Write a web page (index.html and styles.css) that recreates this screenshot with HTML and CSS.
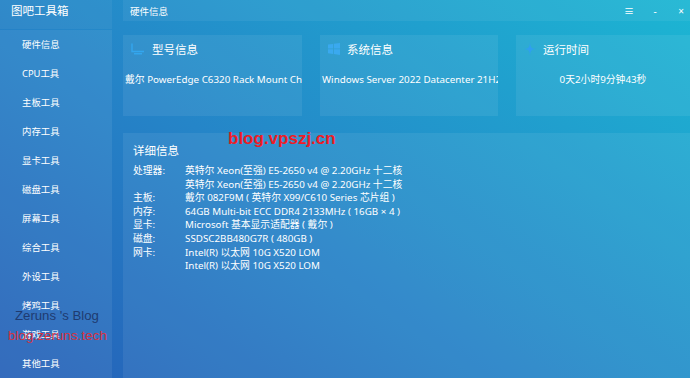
FILE: index.html
```html
<!DOCTYPE html>
<html lang="zh-CN">
<head>
    <meta charset="UTF-8">
    <title>图吧工具箱</title>
    <link rel="stylesheet" href="styles.css">
</head>
<body>
    <div class="app">
        <aside class="side">
            <div class="brand">图吧工具箱</div>
            <nav class="menu">
                <a>硬件信息</a>
                <a>CPU工具</a>
                <a>主板工具</a>
                <a>内存工具</a>
                <a>显卡工具</a>
                <a>磁盘工具</a>
                <a>屏幕工具</a>
                <a>综合工具</a>
                <a>外设工具</a>
                <a>烤鸡工具</a>
                <a>游戏工具</a>
                <a>其他工具</a>
            </nav>
        </aside>
        <main class="main">
            <header class="bar">
                <span class="bar-title">硬件信息</span>
                <span class="ctl">≡</span>
                <span class="ctl">-</span>
                <span class="ctl">×</span>
            </header>
            <section class="cards">
                <div class="card">
                    <div class="card-head">
                        <svg class="ico" width="14" height="12" viewBox="0 0 14 12">
                            <path d="M1 0.5v8h12" fill="none" stroke="#33a6ee" stroke-width="1.4"/>
                            <rect x="3" y="10" width="8" height="1.5" fill="#33a6ee"/>
                        </svg>
                        <span>型号信息</span>
                    </div>
                    <div class="card-val">戴尔 PowerEdge C6320 Rack Mount Chassis</div>
                </div>
                <div class="card">
                    <div class="card-head">
                        <svg class="ico" width="12" height="12" viewBox="0 0 12 12">
                            <path d="M0 1.6l5-.7v4.6H0zM5.8.8L12 0v5.5H5.8zM0 6.3h5v4.7l-5-.7zM5.8 6.3H12V12l-6.2-.9z" fill="#3aa9ef"/>
                        </svg>
                        <span>系统信息</span>
                    </div>
                    <div class="card-val">Windows Server 2022 Datacenter 21H2</div>
                </div>
                <div class="card">
                    <div class="card-head">
                        <svg class="ico" width="12" height="14" viewBox="0 0 12 14">
                            <path d="M6 0C6.4 5 7 6.5 12 7 7 7.5 6.4 9 6 14 5.6 9 5 7.5 0 7 5 6.5 5.6 5 6 0z" fill="#2f9ff0"/>
                        </svg>
                        <span>运行时间</span>
                    </div>
                    <div class="card-val">0天2小时9分钟43秒</div>
                </div>
            </section>
            <section class="detail">
                <h2>详细信息</h2>
                <div class="rows">
                    <span>处理器:</span><span>英特尔 Xeon(至强) E5-2650 v4 @ 2.20GHz 十二核</span>
                    <span></span><span>英特尔 Xeon(至强) E5-2650 v4 @ 2.20GHz 十二核</span>
                    <span>主板:</span><span>戴尔 082F9M ( 英特尔 X99/C610 Series 芯片组 )</span>
                    <span>内存:</span><span>64GB Multi-bit ECC DDR4 2133MHz ( 16GB × 4 )</span>
                    <span>显卡:</span><span>Microsoft 基本显示适配器 ( 戴尔 )</span>
                    <span>磁盘:</span><span>SSDSC2BB480G7R ( 480GB )</span>
                    <span>网卡:</span><span>Intel(R) 以太网 10G X520 LOM</span>
                    <span></span><span>Intel(R) 以太网 10G X520 LOM</span>
                </div>
            </section>
        </main>
    </div>
    <div class="mark mark-vps">blog.vpszj.cn</div>
    <div class="mark mark-zb">Zeruns 's Blog</div>
    <div class="mark mark-zt">blog.zeruns.tech</div>
</body>
</html>
```

FILE: styles.css
```css
* {
    margin: 0;
    padding: 0;
    box-sizing: border-box;
}

body {
    width: 690px;
    height: 378px;
    overflow: hidden;
    font-family: "Noto Sans", "Noto Sans CJK SC", sans-serif;
    color: #ffffff;
    background: linear-gradient(35deg, #2560b8 0%, #2585c8 45%, #1cb6d3 100%);
}

.app {
    display: flex;
    height: 378px;
    gap: 11px;
}

.side {
    width: 112px;
    display: flex;
    flex-direction: column;
    gap: 1px;
}

.brand {
    height: 29px;
    padding: 0 0 0 11px;
    font-size: 11.5px;
    line-height: 21px;
    background: rgba(255, 255, 255, 0.05);
}

.menu {
    flex: 1;
    display: flex;
    flex-direction: column;
    background: rgba(255, 255, 255, 0.07);
}

.menu a {
    height: 29px;
    line-height: 29px;
    padding-left: 22px;
    font-size: 9.4px;
}

.main {
    flex: 1;
    display: flex;
    flex-direction: column;
}

.bar {
    height: 21px;
    display: flex;
    align-items: center;
    padding: 0 0 0 7px;
    font-size: 9.5px;
    background: rgba(255, 255, 255, 0.06);
}

.bar-title {
    flex: 1;
}

.ctl {
    width: 18px;
    margin-left: 8px;
    text-align: center;
    font-size: 10px;
}

.cards {
    margin-top: 14px;
    height: 81px;
    display: grid;
    grid-template-columns: 179px 178px 1fr;
    gap: 18px;
}

.card {
    background: rgba(255, 255, 255, 0.07);
    overflow: hidden;
}

.card-head {
    display: flex;
    align-items: center;
    gap: 7px;
    height: 28px;
    padding-left: 8px;
    font-size: 11.5px;
}

.card-val {
    margin-top: 10px;
    padding: 0 2px;
    font-size: 9.8px;
    line-height: 14px;
    text-align: center;
    white-space: nowrap;
}

.detail {
    flex: 1;
    margin-top: 17px;
    padding: 8px 10px;
    background: rgba(255, 255, 255, 0.07);
}

.detail h2 {
    font-size: 11.5px;
    font-weight: normal;
    line-height: 19px;
    margin-bottom: 4px;
}

.rows {
    display: grid;
    grid-template-columns: 52px 1fr;
    font-size: 9.8px;
    line-height: 13.6px;
}

.mark {
    position: absolute;
    white-space: nowrap;
}

.mark-vps {
    left: 228px;
    top: 129px;
    font-family: "Liberation Sans", sans-serif;
    font-size: 17px;
    font-weight: bold;
    color: #ee1c25;
}

.mark-zb {
    left: 15px;
    top: 308px;
    font-family: "Liberation Sans", sans-serif;
    font-size: 13.2px;
    color: #1f3b70;
}

.mark-zt {
    left: 8px;
    top: 328px;
    font-family: "Liberation Sans", sans-serif;
    font-size: 13.5px;
    color: #d8323f;
}
```
